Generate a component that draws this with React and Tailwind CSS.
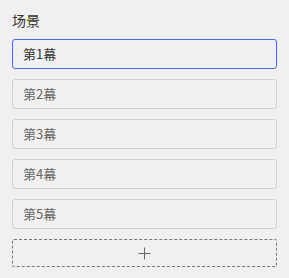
export default function App() {
  const scenes = ['第1幕', '第2幕', '第3幕', '第4幕', '第5幕'];
  const active = 0;

  return (
    <div
      className="w-[289px] h-[278px] bg-[#f0f0f0] px-3 pt-[10px]"
      style={{ fontFamily: '"Noto Sans CJK SC", "Noto Sans", sans-serif' }}
    >
      <div className="text-[14px] leading-[20px] text-[#333] mb-[9px]">场景</div>
      <div className="flex flex-col gap-[10px]">
        {scenes.map((s, i) => (
          <div
            key={s}
            className={
              i === active
                ? 'h-[30px] rounded-[3px] border border-[#4a6ee0] flex items-center pl-[10px] text-[13px] text-[#333]'
                : 'h-[30px] rounded-[3px] border border-[#d0d0d0] flex items-center pl-[10px] text-[13px] text-[#666]'
            }
          >
            {s}
          </div>
        ))}
        <div className="h-[28px] rounded-[2px] border border-dashed border-[#777] flex items-center justify-center">
          <svg width="13" height="13" viewBox="0 0 13 13">
            <path d="M6.5 0.5v12M0.5 6.5h12" stroke="#666" strokeWidth="1" fill="none" />
          </svg>
        </div>
      </div>
    </div>
  );
}
